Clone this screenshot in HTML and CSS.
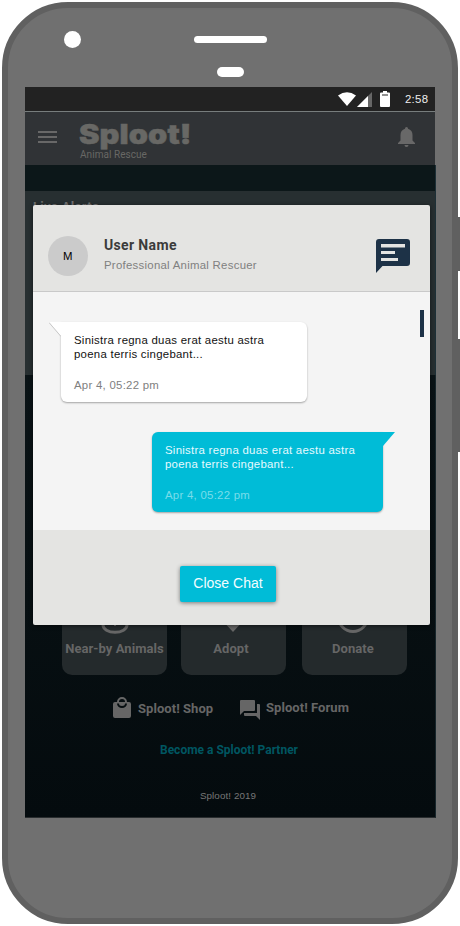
FILE: index.html
```html
<!DOCTYPE html>
<html lang="en">
<head>
<meta charset="utf-8">
<title>Sploot! Chat</title>
<link rel="stylesheet" href="styles.css">
</head>
<body>
<div class="stage">
  <i class="key power"></i>
  <i class="key volume"></i>
  <div class="phone">
    <div class="bezel">
      <i class="camera"></i>
      <div class="ear"><i class="speaker"></i><i class="sensor"></i></div>
      <i></i>
    </div>
    <div class="screen">
      <div class="status">
        <svg class="wifi" width="18" height="14" viewBox="0 0 18 14"><path fill="#fff" d="M0 3.5Q9-3.2 18 3.5L9 14z"/></svg>
        <svg class="signal" width="15" height="15" viewBox="0 0 15 15"><path fill="#666" d="M15 0v15H0z"/><path fill="#fff" d="M11 4V15H0z"/></svg>
        <svg class="battery" width="10" height="16" viewBox="0 0 10 16"><path fill="#fff" d="M3 0h4v1.5h2q1 0 1 1V15q0 1-1 1H1q-1 0-1-1V2.500q0-1 1-1h2z"/><path fill="#222" d="M2 3.500h6v1H2z"/></svg>
        <span class="time">2:58</span>
      </div>
      <header class="appbar">
        <svg class="menu" width="19" height="12" viewBox="0 0 19 12"><path fill="#686868" d="M0 0h19v2H0zM0 5h19v2H0zM0 10h19v2H0z"/></svg>
        <div class="brand"><div class="logo">Sploot!</div><div class="tag">Animal Rescue</div></div>
        <svg class="bell" width="17" height="20" viewBox="0 0 17 20"><path fill="#686868" d="M8.500 0c.9 0 1.500.7 1.500 1.800C13 2.600 14.500 5 14.500 8v5.500L17 16v1H0v-1l2.500-2.500V8C2.500 5 4 2.600 7 1.800 7 .7 7.600 0 8.500 0zM6.500 18h4a2 2 0 0 1-4 0z"/></svg>
      </header>
      <div class="band"></div>
      <section class="alerts">Live Alerts</section>
      <section class="home">
        <div class="cards">
          <div class="card"><svg width="28" height="28" viewBox="0 0 28 28"><ellipse cx="14" cy="19" rx="12" ry="7.300" fill="none" stroke="#666" stroke-width="3"/><path stroke="#666" stroke-width="2" d="M14 12v8"/></svg><span>Near-by Animals</span></div>
          <div class="card adopt"><svg width="28" height="28" viewBox="0 0 28 28"><path fill="#666" d="M14 26L1 12C-2 4 9-1 14 6 19-1 30 4 27 12z"/></svg><span>Adopt</span></div>
          <div class="card donate"><svg width="34" height="34" viewBox="0 0 34 34"><circle cx="17" cy="17" r="14.500" fill="none" stroke="#666" stroke-width="3"/></svg><span>Donate</span></div>
        </div>
        <div class="links">
          <div class="link shop"><svg width="18" height="21" viewBox="0 0 18 21"><path fill="#666" fill-rule="evenodd" d="M4 5a5 5 0 0 1 10 0h2q2 0 2 2v12q0 2-2 2H2q-2 0-2-2V7q0-2 2-2zM6 5h6a3 3 0 0 0-6 0zM4 6.500a5 4.500 0 0 0 10 0h-2a3 2.500 0 0 1-6 0z"/></svg>Sploot! Shop</div>
          <div class="link forum"><svg width="20" height="20" viewBox="0 0 20 20"><path fill="#666" d="M1 0h13q1 0 1 1v9q0 1-1 1H4l-4 4V1q0-1 1-1zM17 4h2q1 0 1 1v15l-4-4H5q-1 0-1-1v-2h13z"/></svg><span>Sploot! Forum</span></div>
        </div>
        <div class="partner">Become a Sploot! Partner</div>
        <div class="copy">Sploot! 2019</div>
      </section>
      <div class="dialog">
        <div class="head">
          <div class="avatar">M</div>
          <div class="who"><div class="name">User Name</div><div class="role">Professional Animal Rescuer</div></div>
          <svg class="chat" width="34" height="34" viewBox="0 0 34 34"><path fill="#1d3247" d="M3 0h28q3 0 3 3v21q0 3-3 3H6.500L0 34V3q0-3 3-3z"/><path fill="#e4e4e2" d="M5 5h24v3.500H5zM5 12h14v3H5zM5 19h17v3H5z"/></svg>
        </div>
        <div class="thread">
          <div class="msg in">
            <svg class="tail" width="12" height="15" viewBox="0 0 12 15"><path fill="#fff" d="M0 0h12v14z"/><path fill="none" stroke="#c6c6c6" d="M0 .5l12 14"/></svg>
            <p>Sinistra regna duas erat aestu astra<br>poena terris cingebant...</p><time>Apr 4, 05:22 pm</time>
          </div>
          <div class="msg out">
            <svg class="tail" width="12" height="15" viewBox="0 0 12 15"><path fill="#00bcd7" d="M0 0h12L0 14z"/></svg>
            <p>Sinistra regna duas erat aestu astra<br>poena terris cingebant...</p><time>Apr 4, 05:22 pm</time>
          </div>
          <i class="thumb"></i>
        </div>
        <div class="foot"><button class="close">Close Chat</button></div>
      </div>
    </div>
  </div>
</div>
</body>
</html>
```
FILE: styles.css
```css
* { box-sizing: border-box; }
body { margin: 0; background: #fff; font-family: "Liberation Sans", Arial, sans-serif; font-size: 11.400px; letter-spacing: .27px; overflow: hidden; }
svg { display: block; flex: none; }
.stage { position: relative; width: 460px; height: 926px; padding: 2px; }
.key { position: absolute; right: 0; width: 4px; background: #606060; }
.power { top: 217px; height: 54px; }
.volume { top: 339px; height: 113px; }
.phone { position: relative; width: 456px; height: 922px; border: 6px solid #606060; border-radius: 66px; background: #707070; padding: 0 17px; }
.bezel { height: 79px; display: grid; grid-template-columns: 1fr 73px 1fr; }
.camera { width: 17px; height: 17px; margin: 23px 0 0 39px; border-radius: 50%; background: #fff; }
.ear { display: flex; flex-direction: column; align-items: center; padding-top: 28px; }
.speaker { width: 73px; height: 7px; border-radius: 4px; background: #fff; }
.sensor { width: 27px; height: 10px; margin-top: 24px; border-radius: 5px; background: #fff; }
.screen { position: relative; width: 411px; height: 731px; }
.status { width: 410px; height: 24px; background: #222; display: flex; align-items: center; color: #fff; }
.wifi { margin-left: 313px; }
.signal { margin-left: 1px; }
.battery { margin-left: 8px; }
.time { margin-left: 15px; line-height: 24px; color: #eee; }
.appbar { width: 410px; height: 54px; border-top: 1px solid #777d7d; background: #303336; display: flex; color: #686865; }
.menu { margin: 19px 0 0 13px; }
.brand { width: 120px; margin: 8px 0 0 22px; }
.logo { height: 28px; font: 900 26.500px/28px Inter, sans-serif; letter-spacing: .1px; white-space: nowrap; -webkit-text-stroke: .5px #686865; width: max-content; transform: scaleX(1.16); transform-origin: left; }
.tag { font: 10px/12px Roboto, sans-serif; letter-spacing: .05px; margin-top: 1px; margin-left: 1px; }
.bell { margin: 15px 0 0 199px; }
.band { height: 26px; background: #0c1719; border-right: 1px solid #1d3037; }
.alerts { height: 184px; background: #272f31; border-right: 1px solid #1d3037; padding: 7px 0 0 8px; font: bold 13px/17px Roboto, sans-serif; letter-spacing: .3px; color: #707070; }
.home { height: 443px; padding-top: 225px; background: linear-gradient(#0a1316, #040b0e); border-right: 1px solid #17262b; border-bottom: 1px solid #292d2f; color: #666; font: bold 13px/16px Roboto, sans-serif; letter-spacing: .06px; }
.cards { display: flex; margin-left: 37px; }
.card { width: 105px; height: 75px; border-radius: 10px; background: #242a2c; display: flex; flex-direction: column; align-items: center; justify-content: flex-end; padding-bottom: 18px; margin-right: 14px; white-space: nowrap; }
.card + .card { margin-right: 16px; }
.card svg { margin-bottom: 7px; }
.adopt { padding-right: 5px; }
.adopt svg { transform: translateX(2px); }
.donate { padding-right: 3px; }
.links { display: flex; height: 40px; margin: 22px 0 0 88px; align-items: flex-start; }
.link { display: flex; }
.shop { width: 127px; gap: 7px; line-height: 24px; }
.forum { gap: 6px; padding-top: 3px; }
.forum span { line-height: 16px; }
.partner { margin-top: 5px; text-align: center; color: #005661; font-size: 12px; letter-spacing: 0; padding-right: 2px; }
.copy { margin-top: 30px; text-align: center; font: 9.800px/16px "Liberation Sans", sans-serif; letter-spacing: .1px; color: #777; padding-right: 4px; }
.dialog { position: absolute; left: 8px; top: 118px; width: 397px; height: 420px; border-radius: 2px; overflow: hidden; background: #e4e4e2; box-shadow: 0 1px 4px #0008; }
.head { height: 87px; display: flex; border-bottom: 1px solid #c9c9c9; }
.avatar { width: 40px; height: 40px; margin: 31px 0 0 15px; border-radius: 50%; background: #cbcbcb; text-align: center; line-height: 40px; color: #000; }
.who { width: 200px; margin: 31px 0 0 16px; }
.name { font: bold 14px/18px Roboto, sans-serif; letter-spacing: .35px; color: #3b3b3b; }
.role { line-height: 16px; margin-top: 3px; color: #808080; }
.chat { margin: 34px 0 0 72px; }
.thread { position: relative; height: 238px; background: #f4f4f4; padding-top: 30px; }
.msg { position: relative; height: 80px; padding: 11px 13px 0; border-radius: 6px; box-shadow: 0 1px 2px #0005; white-space: nowrap; }
.msg p { margin: 0; line-height: 14px; }
.msg time { display: block; margin-top: 16px; line-height: 16px; }
.in { width: 246px; margin-left: 28px; border-top-left-radius: 0; background: #fff; color: #111; }
.in time { color: #808080; }
.out { width: 231px; margin: 30px 0 0 119px; border-top-right-radius: 0; background: #00bcd7; color: #e6faff; }
.out time { color: #79dcea; }
.tail { position: absolute; top: 0; }
.in .tail { left: -12px; }
.out .tail { right: -12px; }
.thumb { position: absolute; right: 6px; top: 18px; width: 4px; height: 27px; background: #1d3247; }
.foot { height: 95px; padding: 36px 0 0 147px; }
.close { display: block; width: 96px; height: 36px; padding: 0 0 2px; border: 0; border-radius: 2px; background: #00bcd7; color: #f2fdff; font: 14px/33px "Liberation Sans", sans-serif; box-shadow: 0 1px 4px #0007; }
```
